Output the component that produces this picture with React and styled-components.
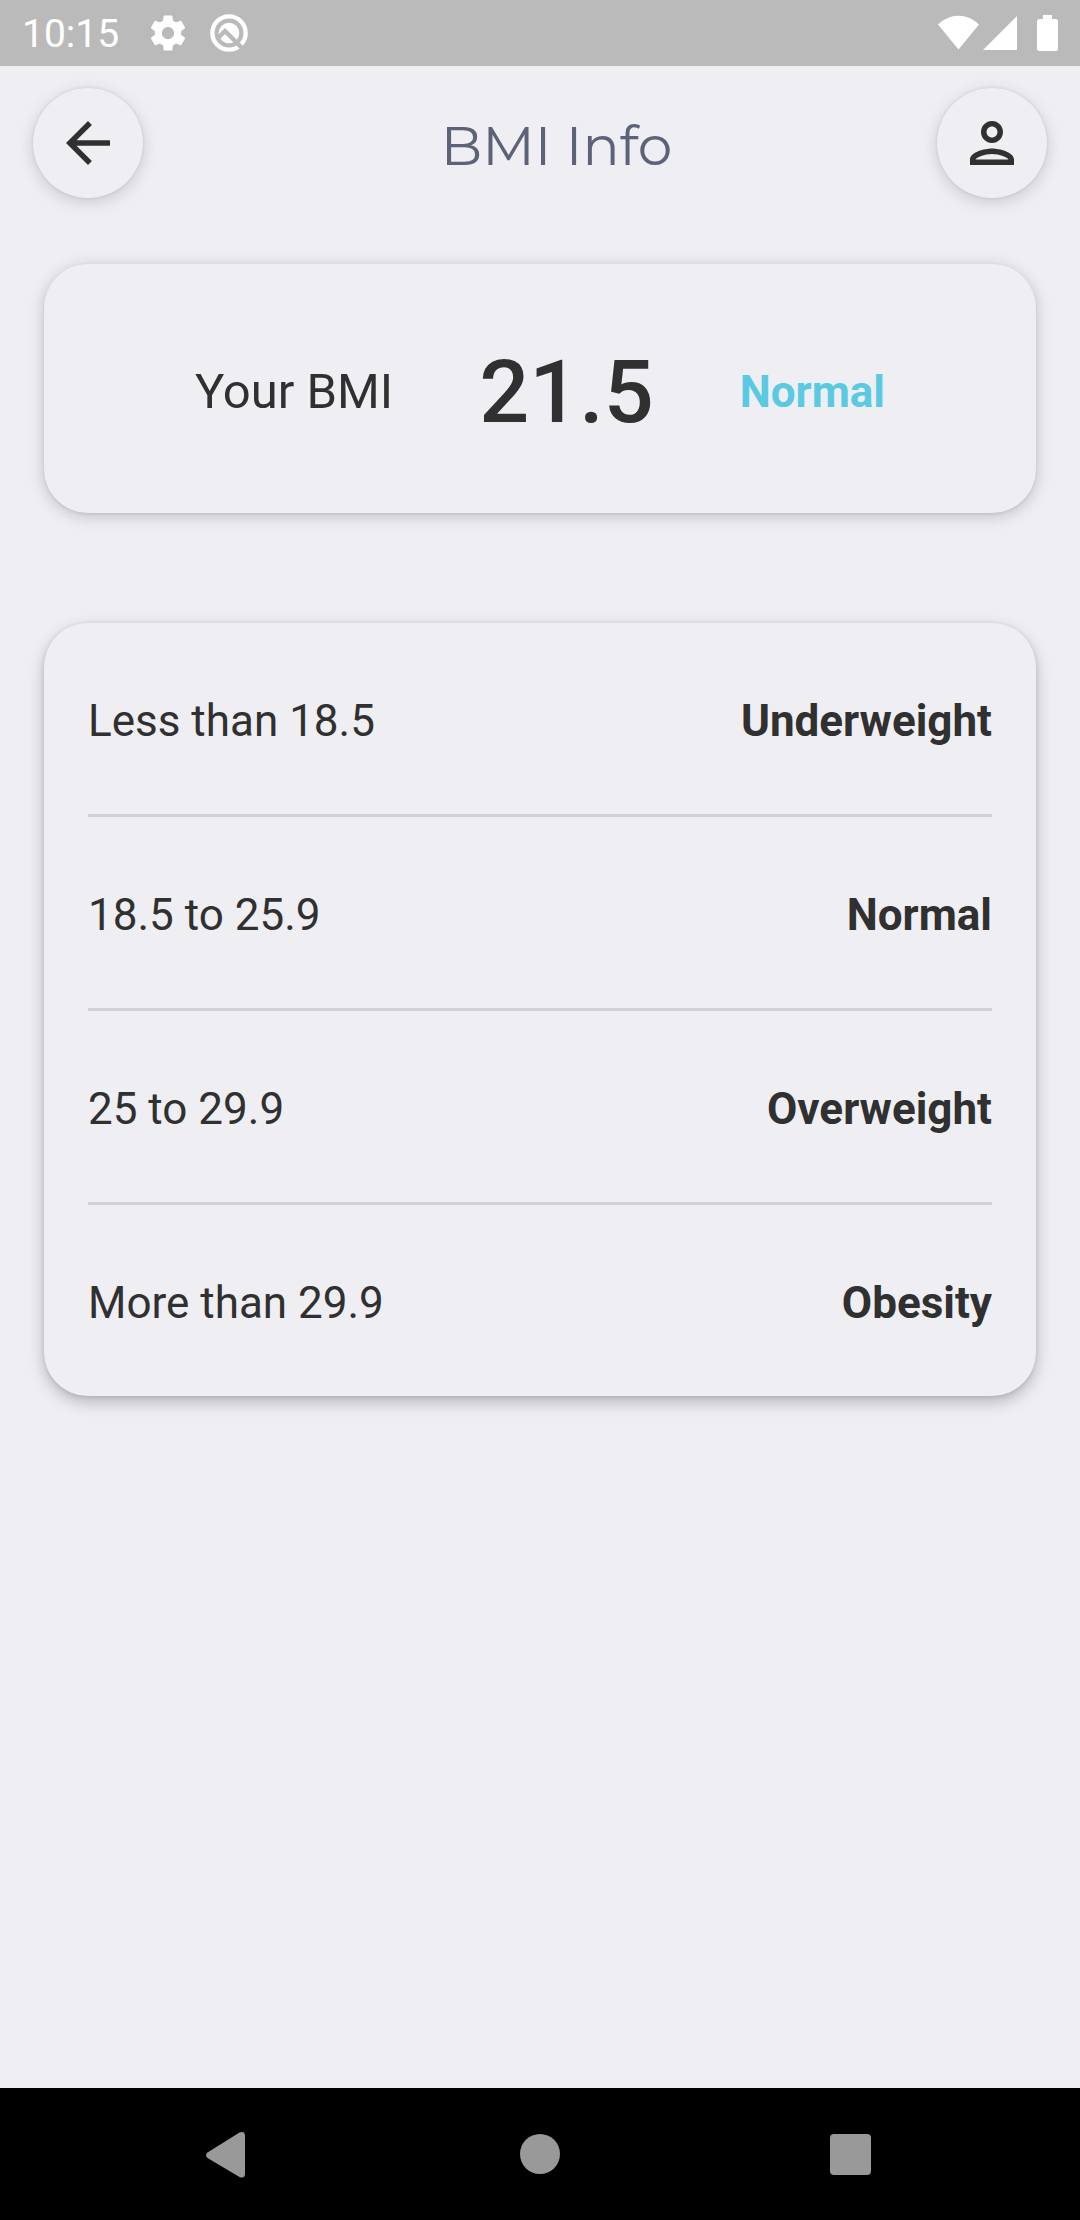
import React from "react";
import styled, { createGlobalStyle } from "styled-components";

const color = {
  surface: "#efeef3",
  ink: "#303030",
  title: "#5c6378",
  accent: "#5acae2",
  divider: "#d2d1d6",
  status: "#bababa",
  nav: "#999999",
};

const GlobalStyle = createGlobalStyle`
  *, *::before, *::after { box-sizing: border-box; }
  body {
    margin: 0;
    background: ${color.surface};
    color: ${color.ink};
    font-family: Roboto, "Liberation Sans", sans-serif;
  }
`;

const Screen = styled.div`
  min-height: 100vh;
  display: flex;
  flex-direction: column;
`;

const StatusBar = styled.div`
  height: 66px;
  padding: 0 22px;
  display: flex;
  align-items: center;
  justify-content: space-between;
  background: ${color.status};
  color: #ffffff;
`;

const StatusGroup = styled.div`
  display: flex;
  align-items: center;
  gap: ${(p) => p.$gap}px;

  svg {
    display: block;
    fill: currentColor;
  }
`;

const Clock = styled.time`
  padding-top: 2px;
  font-size: 39px;
  line-height: 44px;
`;

const Toolbar = styled.header`
  display: flex;
  align-items: center;
  justify-content: space-between;
  padding: 22px 33px;
`;

const RoundButton = styled.button`
  width: 110px;
  height: 110px;
  padding: 22px;
  border: 0;
  border-radius: 50%;
  background: ${color.surface};
  color: ${color.ink};
  box-shadow: 0 4px 16px rgba(0, 0, 0, 0.16), 0 0 3px rgba(0, 0, 0, 0.1);
  cursor: pointer;

  svg {
    display: block;
    width: 66px;
    height: 66px;
    fill: currentColor;
  }
`;

const Title = styled.h1`
  flex: 1;
  margin: 0;
  padding: 6px 0 0 33px;
  text-align: center;
  font-family: Montserrat, Inter, "Open Sans", sans-serif;
  font-size: 55px;
  font-weight: 400;
  line-height: 66px;
  color: ${color.title};
`;

const Content = styled.main`
  flex: 1;
  display: flex;
  flex-direction: column;
  gap: 110px;
  padding: 44px;
`;

const Card = styled.section`
  border-radius: 44px;
  background: ${color.surface};
  box-shadow: ${(p) =>
    p.$raised
      ? "0 6px 16px rgba(0, 0, 0, 0.24), 0 1px 4px rgba(0, 0, 0, 0.1)"
      : "0 3px 16px rgba(0, 0, 0, 0.2), 0 1px 3px rgba(0, 0, 0, 0.08)"};
`;

const Summary = styled(Card)`
  display: flex;
  align-items: center;
  justify-content: center;
  gap: 86px;
  padding: 76px 44px 70px;
`;

const SummaryLabel = styled.span`
  font-size: 49px;
  line-height: 58px;
`;

const SummaryValue = styled.strong`
  font-size: 88px;
  font-weight: 500;
  line-height: 103px;
`;

const SummaryStatus = styled.strong`
  font-size: 44px;
  font-weight: 700;
  line-height: 52px;
  color: ${color.accent};
`;

const RangeCard = styled(Card)`
  padding: 0 44px;
`;

const RangeTable = styled.table`
  width: 100%;
  border-spacing: 0;
  font-size: 44px;
  line-height: 52px;

  th,
  td {
    height: 194px;
    padding: 4px 0 0;
    border-bottom: 3px solid ${color.divider};
  }
  tr:last-child > * {
    height: 191px;
    border-bottom: 0;
  }
  th {
    text-align: left;
    font-weight: 400;
  }
  td {
    text-align: right;
    font-weight: 700;
  }
`;

const NavBar = styled.nav`
  height: 132px;
  display: flex;
  justify-content: center;
  background: #000000;
`;

const NavButton = styled.button`
  flex: 0 1 310px;
  display: flex;
  align-items: center;
  justify-content: center;
  padding: 0;
  border: 0;
  background: transparent;
  color: ${color.nav};
  cursor: pointer;

  svg {
    display: block;
    width: 66px;
    height: 66px;
    fill: currentColor;
  }
`;

const GearIcon = () => (
  <svg width="42" height="42" viewBox="0 0 24 24" aria-hidden="true">
    <path d="M19.43 12.98c.04-.32.07-.64.07-.98s-.03-.66-.07-.98l2.11-1.65c.19-.15.24-.42.12-.64l-2-3.46c-.12-.22-.39-.3-.61-.22l-2.49 1c-.52-.4-1.08-.73-1.69-.98l-.38-2.65C14.46 2.18 14.25 2 14 2h-4c-.25 0-.46.18-.49.42l-.38 2.65c-.61.25-1.17.59-1.69.98l-2.49-1c-.23-.09-.49 0-.61.22l-2 3.46c-.13.22-.07.49.12.64l2.11 1.65c-.04.32-.07.65-.07.98s.03.66.07.98l-2.11 1.65c-.19.15-.24.42-.12.64l2 3.46c.12.22.39.3.61.22l2.49-1c.52.4 1.08.73 1.69.98l.38 2.65c.03.24.24.42.49.42h4c.25 0 .46-.18.49-.42l.38-2.65c.61-.25 1.17-.59 1.69-.98l2.49 1c.23.09.49 0 .61-.22l2-3.46c.12-.22.07-.49-.12-.64l-2.11-1.65zM12 15.5c-1.93 0-3.5-1.57-3.5-3.5s1.57-3.5 3.5-3.5 3.5 1.57 3.5 3.5-1.57 3.5-3.5 3.5z" />
  </svg>
);

const SystemIcon = () => (
  <svg width="40" height="40" viewBox="0 0 120 120" aria-hidden="true">
    <mask id="peak">
      <rect width="120" height="120" fill="#fff" />
      <path d="M18 84 L48 54 L118 124" fill="none" stroke="#000" strokeWidth="13" />
    </mask>
    <mask id="gap">
      <rect width="120" height="120" fill="#fff" />
      <path d="M70 76 L118 124" stroke="#000" strokeWidth="13" />
    </mask>
    <circle cx="60" cy="60" r="50" fill="none" stroke="currentColor" strokeWidth="13" mask="url(#gap)" />
    <circle cx="60" cy="60" r="31" mask="url(#peak)" />
  </svg>
);

const WifiIcon = () => (
  <svg width="41" height="36" viewBox="0 0 41 36" aria-hidden="true">
    <path d="M0 9.500 C12 -2.200 29 -2.200 41 9.500 L20.500 34.500 Z" />
  </svg>
);

const SignalIcon = () => (
  <svg width="34" height="36" viewBox="0 0 34 36" aria-hidden="true">
    <path d="M34 1 V35 H0 Z" />
  </svg>
);

const BatteryIcon = () => (
  <svg width="21" height="36" viewBox="0 0 21 36" aria-hidden="true">
    <path d="M6 0 H15 V4 H18.500 A2.500 2.500 0 0 1 21 6.500 V33.500 A2.500 2.500 0 0 1 18.500 36 H2.500 A2.500 2.500 0 0 1 0 33.500 V6.500 A2.500 2.500 0 0 1 2.500 4 H6 Z" />
  </svg>
);

const ranges = [
  { range: "Less than 18.5", category: "Underweight" },
  { range: "18.5 to 25.9", category: "Normal" },
  { range: "25 to 29.9", category: "Overweight" },
  { range: "More than 29.9", category: "Obesity" },
];

export default function App() {
  return (
    <Screen>
      <GlobalStyle />
      <StatusBar>
        <StatusGroup $gap={28}>
          <Clock>10:15</Clock>
          <StatusGroup $gap={20}>
            <GearIcon />
            <SystemIcon />
          </StatusGroup>
        </StatusGroup>
        <StatusGroup $gap={20}>
          <StatusGroup $gap={4}>
            <WifiIcon />
            <SignalIcon />
          </StatusGroup>
          <BatteryIcon />
        </StatusGroup>
      </StatusBar>

      <Toolbar>
        <RoundButton type="button" aria-label="Back">
          <svg viewBox="0 0 24 24" aria-hidden="true">
            <path d="M20 11H7.830l5.590-5.590L12 4l-8 8 8 8 1.410-1.410L7.830 13H20v-2z" />
          </svg>
        </RoundButton>
        <Title>BMI Info</Title>
        <RoundButton type="button" aria-label="Profile">
          <svg viewBox="0 0 24 24" aria-hidden="true">
            <path d="M12 6c1.100 0 2 .9 2 2s-.9 2-2 2-2-.9-2-2 .9-2 2-2m0 10c2.700 0 5.800 1.290 6 2H6c.23-.72 3.310-2 6-2m0-12C9.790 4 8 5.790 8 8s1.790 4 4 4 4-1.790 4-4-1.790-4-4-4zm0 10c-2.670 0-8 1.340-8 4v2h16v-2c0-2.660-5.330-4-8-4z" />
          </svg>
        </RoundButton>
      </Toolbar>

      <Content>
        <Summary>
          <SummaryLabel>Your BMI</SummaryLabel>
          <SummaryValue>21.5</SummaryValue>
          <SummaryStatus>Normal</SummaryStatus>
        </Summary>

        <RangeCard $raised>
          <RangeTable aria-label="BMI ranges">
            <tbody>
              {ranges.map(({ range, category }) => (
                <tr key={range}>
                  <th scope="row">{range}</th>
                  <td>{category}</td>
                </tr>
              ))}
            </tbody>
          </RangeTable>
        </RangeCard>
      </Content>

      <NavBar aria-label="System navigation">
        <NavButton type="button" aria-label="System back">
          <svg viewBox="0 0 66 66" aria-hidden="true">
            <path d="M10.500 31.500 L42.500 11.600 Q48 9.500 48 15 V52.500 Q48 58 42.500 56 L10.500 37 Q7.500 34.200 10.500 31.500 Z" />
          </svg>
        </NavButton>
        <NavButton type="button" aria-label="Home">
          <svg viewBox="0 0 66 66" aria-hidden="true">
            <circle cx="33" cy="33" r="20" />
          </svg>
        </NavButton>
        <NavButton type="button" aria-label="Recent apps">
          <svg viewBox="0 0 66 66" aria-hidden="true">
            <rect x="13" y="13" width="41" height="41" rx="4" />
          </svg>
        </NavButton>
      </NavBar>
    </Screen>
  );
}
